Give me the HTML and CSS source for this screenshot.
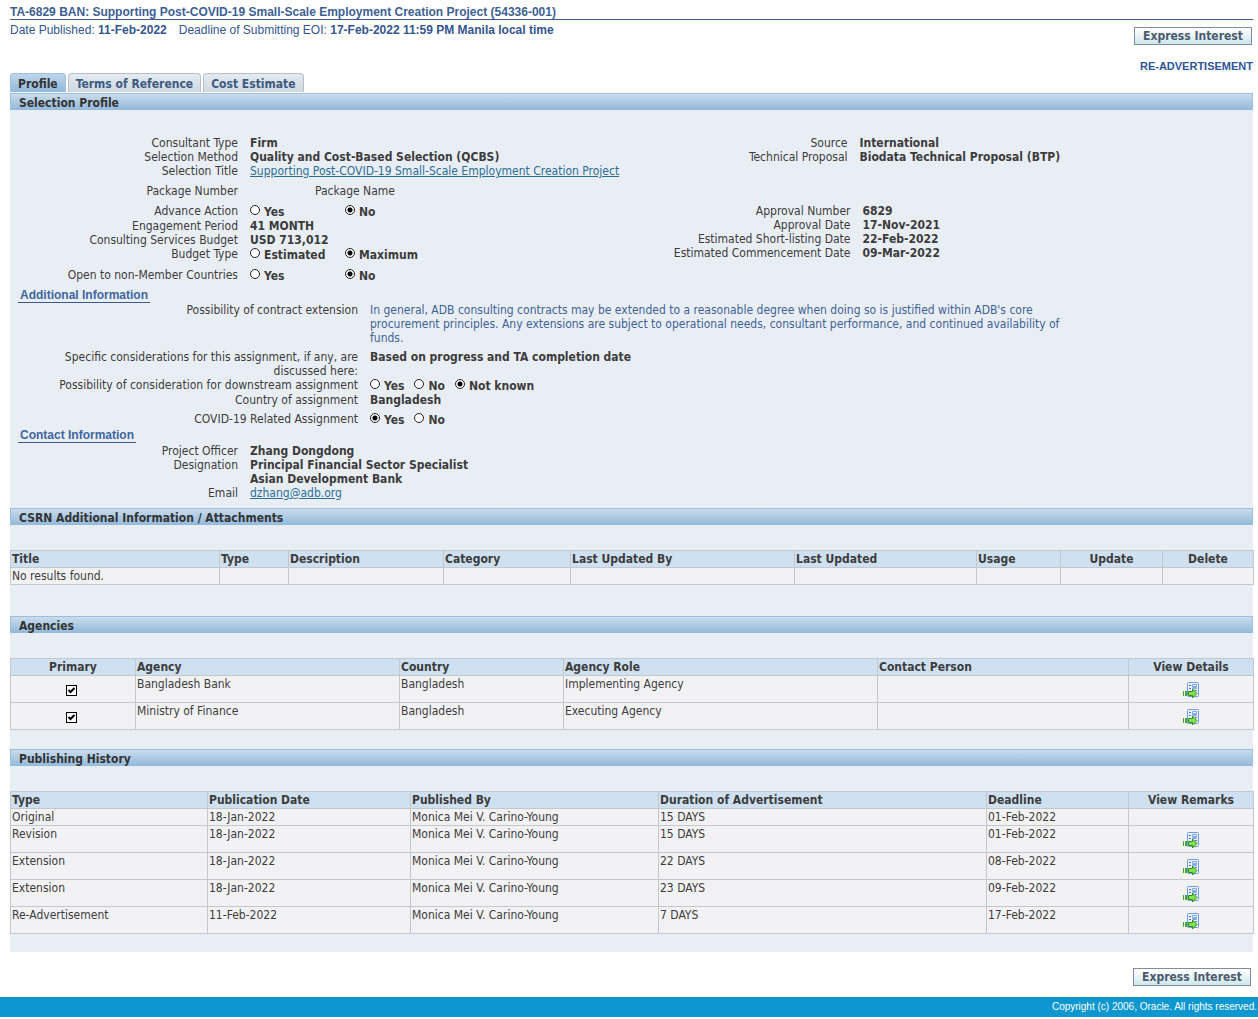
FILE: index.html
```html
<!DOCTYPE html>
<html lang="en">
<head>
<meta charset="utf-8">
<title>TA-6829 BAN: Selection Profile</title>
<link rel="stylesheet" href="styles.css">
</head>
<body>
<svg class="sprite" aria-hidden="true">
  <symbol id="details" viewBox="0 0 16 16">
    <rect x="4.500" y="0.500" width="11" height="14" rx="1" fill="#e9f1fd" stroke="#6c9ce8"/>
    <path d="M6 3h2v1H6zM6 6h2v1H6zM12 8h2v1h-2z" fill="#4f74c0"/>
    <path d="M9.500 2.500h4v2h-4zM9.500 5.500h4v1h-4z" fill="#fff" stroke="#7da5e8"/>
    <path d="M0 9h1v5H0zM2 9h2v5H2z" fill="#3faa22"/>
    <path d="M5.500 9.500H9.500V7L14 11.500L9.500 16V13.500H5.500z" fill="#86de48" stroke="#2d8f1c"/>
  </symbol>
</svg>

<div class="page">
  <header>
    <h1 class="title">TA-6829 BAN: Supporting Post-COVID-19 Small-Scale Employment Creation Project (54336-001)</h1>
    <div class="summary">
      <p class="dates"><span>Date Published: <b>11-Feb-2022</b></span><span>Deadline of Submitting EOI: <b>17-Feb-2022 11:59 PM Manila local time</b></span></p>
      <div class="actions">
        <button class="btn" type="button">Express Interest</button>
        <p class="notice">RE-ADVERTISEMENT</p>
      </div>
    </div>
  </header>

  <nav class="tabs">
    <a class="tab current" href="#profile">Profile</a>
    <a class="tab" href="#terms">Terms of Reference</a>
    <a class="tab" href="#cost">Cost Estimate</a>
  </nav>

  <main>
    <section class="profile" id="profile">
      <h2 class="band">Selection Profile</h2>
      <div class="pair first">
        <dl class="fields">
          <dt>Consultant Type</dt><dd>Firm</dd>
          <dt>Selection Method</dt><dd>Quality and Cost-Based Selection (QCBS)</dd>
          <dt>Selection Title</dt><dd><a href="#title">Supporting Post-COVID-19 Small-Scale Employment Creation Project</a></dd>
          <dt class="spaced">Package Number</dt><dd class="spaced package">Package Name</dd>
        </dl>
        <dl class="fields right">
          <dt>Source</dt><dd>International</dd>
          <dt>Technical Proposal</dt><dd>Biodata Technical Proposal (BTP)</dd>
        </dl>
      </div>
      <div class="pair">
        <dl class="fields">
          <dt>Advance Action</dt>
          <dd class="options wide" role="radiogroup" aria-label="Advance Action"><label><input type="radio" name="advance">Yes</label><label><input type="radio" name="advance" checked>No</label></dd>
          <dt>Engagement Period</dt><dd>41 MONTH</dd>
          <dt>Consulting Services Budget</dt><dd>USD 713,012</dd>
          <dt>Budget Type</dt>
          <dd class="options wide" role="radiogroup" aria-label="Budget Type"><label><input type="radio" name="budget">Estimated</label><label><input type="radio" name="budget" checked>Maximum</label></dd>
          <dt class="spaced">Open to non-Member Countries</dt>
          <dd class="options wide spaced" role="radiogroup" aria-label="Open to non-Member Countries"><label><input type="radio" name="open">Yes</label><label><input type="radio" name="open" checked>No</label></dd>
        </dl>
        <dl class="fields right dated">
          <dt>Approval Number</dt><dd>6829</dd>
          <dt>Approval Date</dt><dd>17-Nov-2021</dd>
          <dt>Estimated Short-listing Date</dt><dd>22-Feb-2022</dd>
          <dt>Estimated Commencement Date</dt><dd>09-Mar-2022</dd>
        </dl>
      </div>

      <h3 class="subhead">Additional Information</h3>
      <dl class="fields long">
        <dt>Possibility of contract extension</dt>
        <dd class="prose">In general, ADB consulting contracts may be extended to a reasonable degree when doing so is justified within ADB's core procurement principles. Any extensions are subject to operational needs, consultant performance, and continued availability of funds.</dd>
        <dt class="spaced">Specific considerations for this assignment, if any, are discussed here:</dt><dd class="spaced">Based on progress and TA completion date</dd>
        <dt>Possibility of consideration for downstream assignment</dt>
        <dd class="options" role="radiogroup" aria-label="Downstream assignment"><label><input type="radio" name="downstream">Yes</label><label><input type="radio" name="downstream">No</label><label><input type="radio" name="downstream" checked>Not known</label></dd>
        <dt>Country of assignment</dt><dd>Bangladesh</dd>
        <dt class="spaced">COVID-19 Related Assignment</dt>
        <dd class="options spaced" role="radiogroup" aria-label="COVID-19 Related Assignment"><label><input type="radio" name="covid" checked>Yes</label><label><input type="radio" name="covid">No</label></dd>
      </dl>

      <h3 class="subhead">Contact Information</h3>
      <dl class="fields contact">
        <dt>Project Officer</dt><dd>Zhang Dongdong</dd>
        <dt>Designation</dt><dd>Principal Financial Sector Specialist<br>Asian Development Bank</dd>
        <dt>Email</dt><dd><a href="mailto:dzhang@adb.org">dzhang@adb.org</a></dd>
      </dl>
    </section>

    <section class="attachments">
      <h2 class="band">CSRN Additional Information / Attachments</h2>
      <table class="grid">
        <colgroup><col class="w209"><col class="w69"><col class="w155"><col class="w127"><col class="w224"><col class="w182"><col class="w84"><col class="w102"><col class="w91"></colgroup>
        <thead><tr><th>Title</th><th>Type</th><th>Description</th><th>Category</th><th>Last Updated By</th><th>Last Updated</th><th>Usage</th><th class="mid">Update</th><th class="mid">Delete</th></tr></thead>
        <tbody><tr><td>No results found.</td><td></td><td></td><td></td><td></td><td></td><td></td><td></td><td></td></tr></tbody>
      </table>
    </section>

    <section class="agencies">
      <h2 class="band">Agencies</h2>
      <table class="grid">
        <colgroup><col class="w125"><col class="w264"><col class="w164"><col class="w314"><col class="w251"><col class="w125"></colgroup>
        <thead><tr><th class="mid">Primary</th><th>Agency</th><th>Country</th><th>Agency Role</th><th>Contact Person</th><th class="mid">View Details</th></tr></thead>
        <tbody>
          <tr class="tall"><td class="mid check"><input type="checkbox" aria-label="Bangladesh Bank is primary" checked></td><td>Bangladesh Bank</td><td>Bangladesh</td><td>Implementing Agency</td><td></td><td class="mid"><a href="#agency-1" aria-label="View details"><svg class="icon"><use href="#details"/></svg></a></td></tr>
          <tr class="tall"><td class="mid check"><input type="checkbox" aria-label="Ministry of Finance is primary" checked></td><td>Ministry of Finance</td><td>Bangladesh</td><td>Executing Agency</td><td></td><td class="mid"><a href="#agency-2" aria-label="View details"><svg class="icon"><use href="#details"/></svg></a></td></tr>
        </tbody>
      </table>
    </section>

    <section class="history">
      <h2 class="band">Publishing History</h2>
      <table class="grid">
        <colgroup><col class="w197"><col class="w203"><col class="w248"><col class="w328"><col class="w142"><col class="w125"></colgroup>
        <thead><tr><th>Type</th><th>Publication Date</th><th>Published By</th><th>Duration of Advertisement</th><th>Deadline</th><th class="mid">View Remarks</th></tr></thead>
        <tbody>
          <tr><td>Original</td><td>18-Jan-2022</td><td>Monica Mei V. Carino-Young</td><td>15 DAYS</td><td>01-Feb-2022</td><td></td></tr>
          <tr class="tall"><td>Revision</td><td>18-Jan-2022</td><td>Monica Mei V. Carino-Young</td><td>15 DAYS</td><td>01-Feb-2022</td><td class="mid"><a href="#remark-1" aria-label="View remarks"><svg class="icon"><use href="#details"/></svg></a></td></tr>
          <tr class="tall"><td>Extension</td><td>18-Jan-2022</td><td>Monica Mei V. Carino-Young</td><td>22 DAYS</td><td>08-Feb-2022</td><td class="mid"><a href="#remark-2" aria-label="View remarks"><svg class="icon"><use href="#details"/></svg></a></td></tr>
          <tr class="tall"><td>Extension</td><td>18-Jan-2022</td><td>Monica Mei V. Carino-Young</td><td>23 DAYS</td><td>09-Feb-2022</td><td class="mid"><a href="#remark-3" aria-label="View remarks"><svg class="icon"><use href="#details"/></svg></a></td></tr>
          <tr class="tall"><td>Re-Advertisement</td><td>11-Feb-2022</td><td>Monica Mei V. Carino-Young</td><td>7 DAYS</td><td>17-Feb-2022</td><td class="mid"><a href="#remark-4" aria-label="View remarks"><svg class="icon"><use href="#details"/></svg></a></td></tr>
        </tbody>
      </table>
    </section>
  </main>

  <div class="bottom-actions"><button class="btn" type="button">Express Interest</button></div>
</div>
<footer class="footer">Copyright (c) 2006, Oracle. All rights reserved.</footer>
</body>
</html>
```
FILE: styles.css
```css
* { box-sizing: border-box; }
body {
  margin: 0;
  background: #fff;
  color: #3c3c3c;
  font: 12px/14px "DejaVu Sans Condensed", Tahoma, sans-serif;
}
h1, h2, h3, p, dl, dd { margin: 0; font-size: 12px; }
.sprite { display: none; }
.page { padding: 5px 5px 0 10px; }

/* Header */
.title {
  border-bottom: 1px solid #3b5a93;
  color: #3d5f95;
  font: bold 12px/14px "Liberation Sans", Arial, sans-serif;
}
.summary { display: flex; justify-content: space-between; min-height: 53px; }
.dates {
  display: flex;
  gap: 12px;
  padding-top: 3px;
  color: #35568f;
  font: 12px/14px "Liberation Sans", Arial, sans-serif;
}
.actions { display: flex; flex-direction: column; align-items: flex-end; gap: 14px; padding-top: 7px; }
.btn {
  width: 118px;
  height: 18px;
  margin-right: 1px;
  padding: 0;
  border: 1px solid #7d8ba5;
  background: linear-gradient(#fff, #e8f4f7 50%, #cbe6ec);
  color: #4c5a6e;
  font: bold 12px/16px "DejaVu Sans Condensed", Tahoma, sans-serif;
}
.notice { color: #2f5597; font: bold 11px/14px "Liberation Sans", Arial, sans-serif; }

/* Tabs */
.tabs { display: flex; gap: 2px; padding-bottom: 1px; }
.tab {
  height: 19px;
  padding: 3px 7px 0;
  border: 1px solid #b8bec8;
  border-bottom: 0;
  border-radius: 4px 4px 0 0;
  background: linear-gradient(#e4ebf1, #ced8e0);
  color: #3d5a80;
  font-weight: bold;
  line-height: 14px;
  text-decoration: none;
}
.tab.current { border-color: #9fbfdf; background: linear-gradient(#bed6ea, #92b9dc); color: #333; }

/* Sections */
main { padding-bottom: 18px; background: #e9eef5; }
.band {
  height: 17px;
  padding: 1px 8px 0;
  border: 1px solid #9dbddc;
  border-width: 1px 1px 0;
  background: linear-gradient(#cadcec, #92b9db);
  color: #333;
  font-size: 12px;
  line-height: 16px;
}
.profile { padding-bottom: 8px; }
.attachments { padding-bottom: 31px; }
.agencies { padding-bottom: 19px; }

/* Label and value pairs */
.pair { display: grid; grid-template-columns: 1fr 1fr; margin-bottom: 5px; }
.pair.first { padding-top: 26px; margin-bottom: 6px; }
.fields { display: grid; grid-template-columns: 228px 1fr; column-gap: 12px; align-content: start; }
.fields.right { grid-template-columns: 216px 1fr; }
.fields.dated { grid-template-columns: 219px 1fr; }
.fields.long { grid-template-columns: 348px minmax(0, 700px); margin-bottom: 1px; }
.fields.contact { padding-top: 1px; }
.fields dt { text-align: right; }
.fields dd { font-weight: bold; }
.fields .spaced { margin-top: 6px; }
.fields.long .spaced { margin-top: 5px; }
.fields dd.package { padding-left: 65px; font-weight: normal; }
.fields dd.prose { color: #3e6296; font-weight: normal; }
.fields a { color: #2b6e95; font-weight: normal; }
.options { display: flex; gap: 10px; height: 15px; }
.options label { display: flex; gap: 4px; padding-top: 1px; }
.options.wide { display: grid; grid-template-columns: 95px 1fr; column-gap: 0; }
.options input {
  appearance: none;
  width: 10px;
  height: 10px;
  margin: 0;
  border: 1px solid #222;
  border-radius: 50%;
  background: #fff;
}
.options input:checked { background: radial-gradient(circle, #000 0 2px, #fff 3px); }
.subhead {
  width: max-content;
  margin-left: 8px;
  padding: 0 2px;
  border-bottom: 1px solid #3b5a93;
  color: #3f669f;
  font: bold 12px/14px "Liberation Sans", Arial, sans-serif;
}

/* Data tables */
.grid {
  width: calc(100% - 1px);
  margin-top: 25px;
  border-collapse: collapse;
  table-layout: fixed;
}
.grid th, .grid td {
  height: 17px;
  padding: 1px 1px;
  border: 1px solid #c3c7ce;
  text-align: left;
  vertical-align: top;
}
.grid th { background: #cfe0f1; }
.grid td { background: #f2f2f5; }
.grid .tall td { height: 27px; }
.grid .mid { text-align: center; vertical-align: middle; }
.grid .tall .mid { padding-top: 3px; }
.grid .check { padding-right: 4px; }
.grid input {
  display: block;
  appearance: none;
  width: 11px;
  height: 11px;
  margin: 0 auto;
  border: 1px solid #000;
  background: #fff;
}
.grid input:checked { background: #fff url("data:image/svg+xml,%3Csvg xmlns='http://www.w3.org/2000/svg' viewBox='0 0 9 9'%3E%3Cpath d='M1.500 4L3.500 6L7.500 2' fill='none' stroke='%23000' stroke-width='2'/%3E%3C/svg%3E") center / 9px 9px; }
.icon { display: block; width: 16px; height: 16px; margin: 0 auto; }
.w69 { width: 69px; }
.w84 { width: 84px; }
.w91 { width: 91px; }
.w102 { width: 102px; }
.w125 { width: 125px; }
.w127 { width: 127px; }
.w142 { width: 142px; }
.w155 { width: 155px; }
.w164 { width: 164px; }
.w182 { width: 182px; }
.w197 { width: 197px; }
.w203 { width: 203px; }
.w209 { width: 209px; }
.w224 { width: 224px; }
.w248 { width: 248px; }
.w251 { width: 251px; }
.w264 { width: 264px; }
.w314 { width: 314px; }
.w328 { width: 328px; }

/* Footer */
.bottom-actions { display: flex; justify-content: flex-end; padding: 16px 1px 11px 0; }
.footer {
  padding-right: 1px;
  background: #0c97d1;
  color: #fff;
  font: 10px/20px "Liberation Sans", Arial, sans-serif;
  text-align: right;
}
```
